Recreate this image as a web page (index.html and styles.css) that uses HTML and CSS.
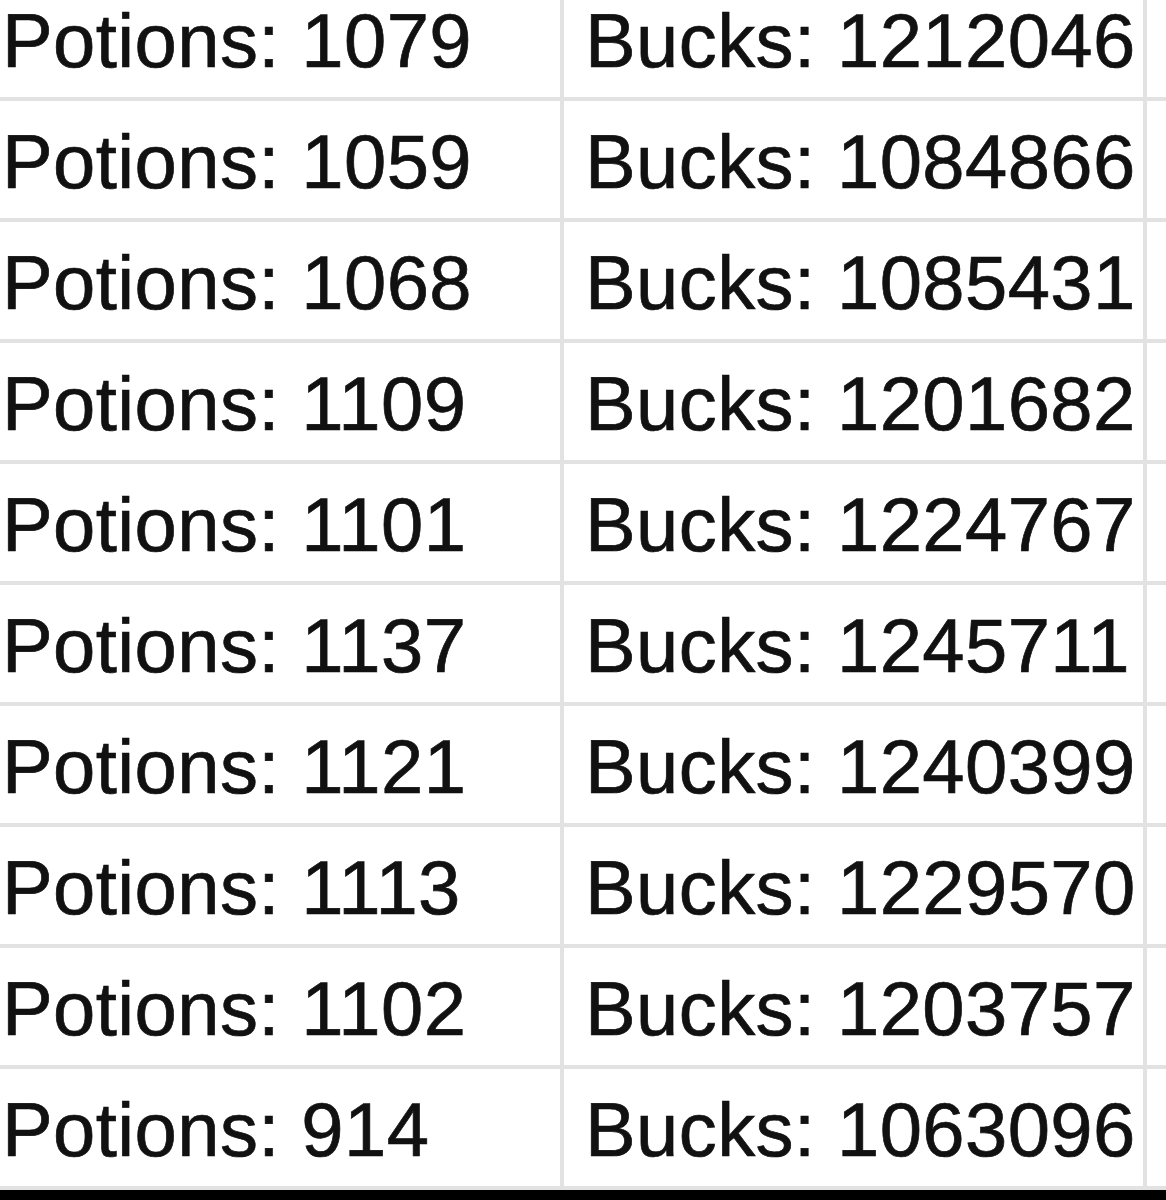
FILE: index.html
```html
<!DOCTYPE html>
<html>
<head>
<meta charset="utf-8">
<link rel="stylesheet" href="styles.css">
</head>
<body>
<div class="sheet">
  <div class="row clipped"><div class="cell col-a">Potions: 1079</div><div class="cell col-b">Bucks: 1212046</div><div class="cell extra"></div></div>
  <div class="row"><div class="cell col-a">Potions: 1059</div><div class="cell col-b">Bucks: 1084866</div><div class="cell extra"></div></div>
  <div class="row"><div class="cell col-a">Potions: 1068</div><div class="cell col-b">Bucks: 1085431</div><div class="cell extra"></div></div>
  <div class="row"><div class="cell col-a">Potions: 1109</div><div class="cell col-b">Bucks: 1201682</div><div class="cell extra"></div></div>
  <div class="row"><div class="cell col-a">Potions: 1101</div><div class="cell col-b">Bucks: 1224767</div><div class="cell extra"></div></div>
  <div class="row"><div class="cell col-a">Potions: 1137</div><div class="cell col-b">Bucks: 1245711</div><div class="cell extra"></div></div>
  <div class="row"><div class="cell col-a">Potions: 1121</div><div class="cell col-b">Bucks: 1240399</div><div class="cell extra"></div></div>
  <div class="row"><div class="cell col-a">Potions: 1113</div><div class="cell col-b">Bucks: 1229570</div><div class="cell extra"></div></div>
  <div class="row"><div class="cell col-a">Potions: 1102</div><div class="cell col-b">Bucks: 1203757</div><div class="cell extra"></div></div>
  <div class="row"><div class="cell col-a">Potions: 914</div><div class="cell col-b">Bucks: 1063096</div><div class="cell extra"></div></div>
</div>
<div class="bottom-bar"></div>
</body>
</html>
```

FILE: styles.css
```css
html, body {
  margin: 0;
  padding: 0;
  background: #ffffff;
  overflow: hidden;
}

body {
  width: 1166px;
  height: 1200px;
}

.sheet {
  display: flex;
  flex-direction: column;
}

.row {
  display: flex;
  height: 121px;
  box-sizing: border-box;
  border-bottom: 4px solid #e2e2e2;
  padding-top: 23px;
}

.row.clipped {
  height: 101px;
  padding-top: 3px;
}

.cell {
  flex: 0 0 auto;
  box-sizing: border-box;
  border-right: 4px solid #e2e2e2;
  margin-top: -23px;
  padding-top: 23px;
  font-family: "Liberation Sans", Arial, sans-serif;
  font-size: 76px;
  line-height: 76px;
  letter-spacing: 0.4px;
  color: #111111;
  -webkit-text-stroke: 0.7px #111111;
  white-space: nowrap;
  overflow: hidden;
}

.row.clipped .cell {
  margin-top: -3px;
  padding-top: 3px;
}

.col-a {
  width: 564px;
  padding-left: 2px;
}

.col-b {
  width: 583px;
  padding-left: 21px;
}

.cell.extra {
  flex: 1 1 auto;
  border-right: none;
}

.bottom-bar {
  height: 10px;
  background: #000000;
}
```
